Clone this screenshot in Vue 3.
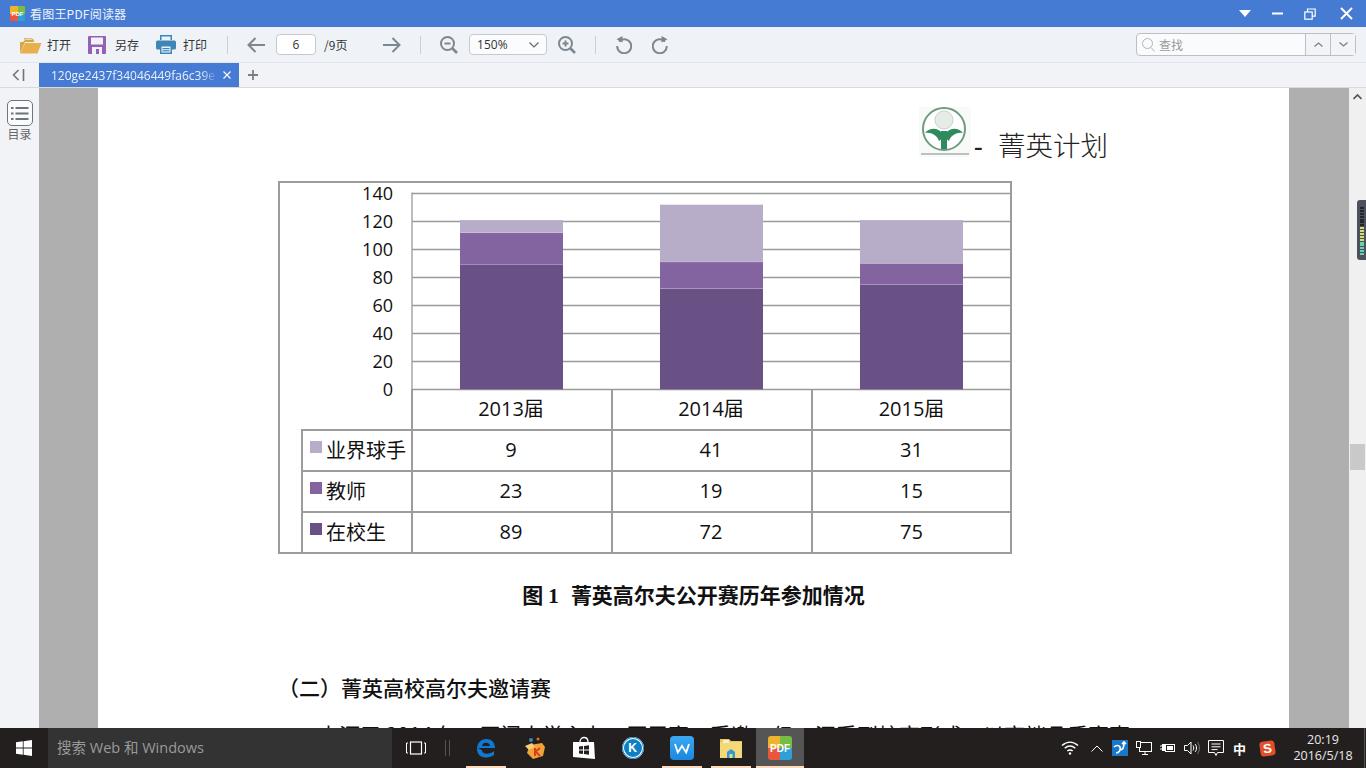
<script setup>
const axis = [140, 120, 100, 80, 60, 40, 20, 0]
const unit = 1.4
const base = 197
const columns = [
  { name: '2013届', x: 48, a: 89, b: 23, c: 9 },
  { name: '2014届', x: 248, a: 72, b: 19, c: 41 },
  { name: '2015届', x: 448, a: 75, b: 15, c: 31 },
]
const rows = [
  { label: '业界球手', color: '#b7adc8', key: 'c' },
  { label: '教师', color: '#8363a0', key: 'b' },
  { label: '在校生', color: '#6a5185', key: 'a' },
]
const segs = (c) => [
  { h: c.a * unit, y: base - c.a * unit, f: '#6a5185' },
  { h: c.b * unit, y: base - (c.a + c.b) * unit, f: '#8363a0' },
  { h: c.c * unit, y: base - (c.a + c.b + c.c) * unit, f: '#b7adc8' },
]
</script>

<template>
  <div class="app">
    <header class="titlebar">
      <span class="pdf-logo small"><i class="q1"></i><i class="q2"></i><i class="q3"></i><i class="q4"></i><b>PDF</b></span>
      <span class="title">看图王PDF阅读器</span>
      <span class="winctl">
        <svg width="12" height="7" viewBox="0 0 12 7"><path d="M0 0h12L6 7z" fill="#fff"/></svg>
        <svg width="11" height="3" viewBox="0 0 11 3"><rect width="11" height="2" y="0.5" fill="#fff"/></svg>
        <svg width="12" height="12" viewBox="0 0 12 12" fill="none" stroke="#fff" stroke-width="1.2"><rect x="0.8" y="4" width="7.4" height="7.2"/><path d="M3.5 4V1h7.7v7.2H8.2"/></svg>
        <svg width="13" height="13" viewBox="0 0 13 13" stroke="#fff" stroke-width="2"><path d="M1 1l11 11M12 1L1 12"/></svg>
      </span>
    </header>

    <div class="toolbar">
      <button class="tool t-open">
        <svg width="23" height="18" viewBox="1 0 23 18"><path d="M1 17V6h3l2-2V3h8l1 2v1H6L1 17z" fill="#d7a648"/><path d="M5 2.5h8l1 1.5H6z" fill="#f5f1e6" stroke="#c99a3f" stroke-width=".6"/><path d="M6 7h16.500l-4 10.500H1z" fill="#e7b04a"/></svg>
        <span>打开</span>
      </button>
      <button class="tool t-save">
        <svg width="18" height="18" viewBox="0 0 18 18"><path d="M0 1a1 1 0 011-1h16a1 1 0 011 1v16a1 1 0 01-1 1H1a1 1 0 01-1-1z" fill="#9462b4"/><rect x="3" y="1.500" width="12" height="7" fill="#f4f0f7"/><rect x="4" y="11" width="10" height="7" fill="#f4f0f7"/><rect x="8" y="13" width="3" height="5" fill="#9462b4"/></svg>
        <span>另存</span>
      </button>
      <button class="tool t-print">
        <svg width="20" height="19" viewBox="0 0 20 19"><rect x="4" y="0" width="12" height="5" fill="#3f86b8"/><rect x="5.500" y="1.500" width="9" height="3.500" fill="#eef2f7"/><rect x="0" y="5.500" width="20" height="9" rx="1.500" fill="#3f86b8"/><rect x="4" y="10" width="12" height="9" fill="#3f86b8"/><rect x="5.500" y="11.500" width="9" height="6" fill="#eef2f7"/><rect x="6.500" y="13" width="7" height="1.200" fill="#3f86b8"/><rect x="6.500" y="15.200" width="7" height="1.200" fill="#3f86b8"/></svg>
        <span>打印</span>
      </button>
      <i class="sep s1"></i>
      <svg class="arrow a-back" width="18" height="16" viewBox="0 0 18 16" fill="none" stroke="#7d8790" stroke-width="2"><path d="M8.500 1L1.500 8l7 7M2 8h16"/></svg>
      <div class="pagebox">6</div>
      <span class="pagecount">/9页</span>
      <svg class="arrow a-next" width="18" height="16" viewBox="0 0 18 16" fill="none" stroke="#7d8790" stroke-width="2"><path d="M9.500 1l7 7-7 7M16 8H0"/></svg>
      <i class="sep s2"></i>
      <svg class="zoom-out" width="18" height="18" viewBox="0 0 18 18" fill="none" stroke="#7d8790" stroke-width="2"><circle cx="7.500" cy="7.500" r="6.500"/><path d="M4.500 7.500h6"/><path d="M12.500 12.500l4.500 4.500" stroke-width="2.600"/></svg>
      <div class="zoombox"><span>150%</span><svg width="10" height="6" viewBox="0 0 10 6" fill="none" stroke="#666" stroke-width="1.200"><path d="M.5.500L5 5 9.500.5"/></svg></div>
      <svg class="zoom-in" width="18" height="18" viewBox="0 0 18 18" fill="none" stroke="#7d8790" stroke-width="2"><circle cx="7.500" cy="7.500" r="6.500"/><path d="M4.500 7.500h6M7.500 4.500v6"/><path d="M12.500 12.500l4.500 4.500" stroke-width="2.600"/></svg>
      <i class="sep s3"></i>
      <svg class="rot-l" width="17" height="19" viewBox="0 0 17 19" fill="none" stroke="#7d8790" stroke-width="2"><path d="M4 6.500a7 7 0 11-1.800 4.500"/><path d="M7.500 1v6.500L1.500 4.200z" fill="#7d8790" stroke="none"/></svg>
      <svg class="rot-r" width="17" height="19" viewBox="0 0 17 19" fill="none" stroke="#7d8790" stroke-width="2"><path d="M13 6.500a7 7 0 101.800 4.500"/><path d="M9.500 1v6.500l6-3.300z" fill="#7d8790" stroke="none"/></svg>
      <div class="search">
        <div class="s-input">
          <svg width="13" height="14" viewBox="0 0 13 14" fill="none" stroke="#b0b4b8" stroke-width="1"><circle cx="5.500" cy="5.500" r="5"/><path d="M9 9.500l3.500 4"/></svg>
          <span>查找</span>
        </div>
        <div class="s-btn"><svg width="9" height="5" viewBox="0 0 9 5" fill="none" stroke="#7b7f84" stroke-width="1.300"><path d="M.5 4.500L4.500 1l4 3.500"/></svg></div>
        <div class="s-btn"><svg width="9" height="5" viewBox="0 0 9 5" fill="none" stroke="#7b7f84" stroke-width="1.300"><path d="M.5.500L4.500 4l4-3.500"/></svg></div>
      </div>
    </div>

    <div class="tabbar">
      <div class="collapse">
        <svg width="13" height="12" viewBox="0 0 13 12" fill="none" stroke="#6d7680" stroke-width="1.600"><path d="M6.500 1L1.500 6l5 5M11.500 0v12"/></svg>
      </div>
      <div class="tab">
        <span class="tabname">120ge2437f34046449fa6c39e</span>
        <svg width="8" height="8" viewBox="0 0 8 8" stroke="#fff" stroke-width="1.100"><path d="M.5.500l7 7M7.500.500l-7 7"/></svg>
      </div>
      <svg class="plus" width="10" height="10" viewBox="0 0 10 10" stroke="#7a8087" stroke-width="1.800"><path d="M5 0v10M0 5h10"/></svg>
    </div>

    <main class="main">
      <aside class="side">
        <div class="toc-icon">
          <svg width="18" height="15" viewBox="0 0 18 15" fill="#6d747b"><rect x="0" y="1" width="2.500" height="2"/><rect x="4.500" y="1" width="13" height="2"/><rect x="0" y="6.500" width="2.500" height="2"/><rect x="4.500" y="6.500" width="13" height="2"/><rect x="0" y="12" width="2.500" height="2"/><rect x="4.500" y="12" width="13" height="2"/></svg>
        </div>
        <span class="toc-label">目录</span>
      </aside>

      <div class="viewer">
        <article class="page">
          <div class="doc-head">
            <svg class="logo" width="52" height="50" viewBox="0 0 52 50">
              <rect width="52" height="50" fill="#f7faf7"/>
              <circle cx="25" cy="22" r="21" fill="#fff" stroke="#6f9b80" stroke-width="2"/>
              <circle cx="25" cy="13" r="9" fill="#e6ebe6" stroke="#c6d2c8"/>
              <path d="M22 24h6v18h-6z" fill="#2f8a5c"/>
              <path d="M25 30c-3-9-13-11-19-4 6-1 12 2 14 8zM25 30c3-9 13-11 19-4-6-1-12 2-14 8z" fill="#2f8a5c"/>
              <rect x="2" y="46" width="48" height="2" fill="#b9c2bc"/>
            </svg>
            <span class="doc-title"><span class="dash">-</span>菁英计划</span>
          </div>

          <section class="chart">
            <svg class="plot" width="733" height="206" viewBox="-134 -9.500 733 206">
              <text v-for="(v, i) in axis" :key="v" class="tick" x="-19" :y="i * 28 + 7" text-anchor="end">{{ v }}</text>
              <line v-for="(v, i) in axis" :key="'g' + v" x1="0" x2="600" :y1="i * 28 + 1" :y2="i * 28 + 1" stroke="#9a9a9a" stroke-width="1.300"/>
              <line x1="0" x2="0" y1="0" y2="197" stroke="#9a9a9a" stroke-width="1.300"/>
              <line x1="599.500" x2="599.500" y1="0" y2="197" stroke="#9a9a9a" stroke-width="1.300"/>
              <g v-for="c in columns" :key="c.name">
                <rect v-for="(s, j) in segs(c)" :key="j" :x="c.x" :y="s.y" width="103" :height="s.h - 0.200" :fill="s.f"/>
              </g>
            </svg>
            <table class="data">
              <tbody>
                <tr>
                  <td class="blank"></td>
                  <td v-for="c in columns" :key="c.name">{{ c.name }}</td>
                </tr>
                <tr v-for="r in rows" :key="r.label">
                  <td class="legend"><i class="swatch" :style="{ background: r.color }"></i>{{ r.label }}</td>
                  <td v-for="c in columns" :key="c.name">{{ c[r.key] }}</td>
                </tr>
              </tbody>
            </table>
          </section>

          <p class="caption"><span class="latin">图 1</span>菁英高尔夫公开赛历年参加情况</p>
          <h3 class="section-title">（二）菁英高校高尔夫邀请赛</h3>
          <p class="body-line">本源于 2014 年，厦门大学主办，历届赛，受邀一级，深受到校高形成，以高端品质赛事</p>
        </article>
      </div>

      <div class="scroll">
        <svg width="9" height="6" viewBox="0 0 9 6" fill="none" stroke="#555" stroke-width="1.700"><path d="M.5 5L4.500 1l4 4"/></svg>
        <div class="thumb"></div>
      </div>
      <div class="meter">
        <i v-for="n in 17" :key="n" :class="n > 12 ? 'm-teal' : n > 7 ? 'm-yellow' : 'm-dark'"></i>
      </div>
    </main>

    <footer class="taskbar">
      <div class="start">
        <svg width="16" height="16" viewBox="0 0 16 16" fill="#fff"><path d="M0 2.300l6.800-1v6.300H0zM7.600 1.200L16 0v7.600H7.600zM0 8.400h6.800v6.300L0 13.700zM7.600 8.400H16V16l-8.400-1.200z"/></svg>
      </div>
      <div class="tsearch">搜索 Web 和 Windows</div>
      <svg class="taskview" width="20" height="14" viewBox="0 0 20 14" fill="none" stroke="#fff"><rect x="4.500" y="1" width="11" height="12" stroke-width="1.200"/><path d="M2 2H.5v10H2M18 2h1.500v10H18"/></svg>
      <i class="grip"></i>
      <div class="apps">
        <div class="app-slot u">
          <svg width="22" height="22" viewBox="0 0 22 22" fill="none"><path d="M3 11h17c0-6-4-9-8.500-9C6 2 2 6 2 12c0 6 4.500 8.500 9 8.500 3 0 6-1 8-2.500v-4c-2 1.700-4.500 2.700-7 2.700-3 0-5-1.500-5.300-3.700z" fill="#0f78d4"/><path d="M7 9h8c-.2-2-2-3.200-4-3.200S7.300 7 7 9z" fill="#231f1f"/></svg>
        </div>
        <div class="app-slot">
          <svg width="24" height="24" viewBox="0 0 24 24"><path d="M7 9l12-2 3 4-2 9-10 3-6-6z" fill="#f1a33a"/><path d="M2 10l7-3 3 4-6 3z" fill="#f8cd74"/><circle cx="8" cy="4" r="2" fill="#3f83c4"/><circle cx="15" cy="3" r="1.500" fill="#e66a2b"/><path d="M12 12v8M12 16l5-4M13 16l4 4" stroke="#d6401f" stroke-width="2" fill="none"/></svg>
        </div>
        <div class="app-slot">
          <svg width="22" height="24" viewBox="0 0 22 24"><path d="M7 6c0-6 8-6 8 0" fill="none" stroke="#fff" stroke-width="1.300"/><path d="M0 6h21l1 17-22-2z" fill="#fff"/><path d="M6 10.500l4-.5v3.500H6zM11 9.900l5-.6v4.200h-5zM6 14.500h4V18l-4-.5zM11 14.500h5v4.200l-5-.6z" fill="#231f1f"/></svg>
        </div>
        <div class="app-slot">
          <span class="k-icon">K</span>
        </div>
        <div class="app-slot u">
          <span class="w-icon"><svg width="16" height="11" viewBox="0 0 16 11" fill="none" stroke="#fff" stroke-width="1.800"><path d="M1 1l2.800 8.500L8 3l4.200 6.500L15 1"/></svg></span>
        </div>
        <div class="app-slot u">
          <svg width="22" height="20" viewBox="0 0 22 20"><path d="M0 1h9l2 2h11v17H0z" fill="#e9c65c"/><rect x="0" y="4" width="22" height="16" fill="#f5d979"/><path d="M3 2h6v3H3z" fill="#f7efd0"/><path d="M7 14l4-3 4 3v6H7z" fill="#2a9bd8"/><rect x="9.500" y="16" width="3" height="4" fill="#f5d979"/></svg>
        </div>
        <div class="app-slot active">
          <span class="pdf-logo"><i class="q1"></i><i class="q2"></i><i class="q3"></i><i class="q4"></i><b>PDF</b></span>
        </div>
      </div>
      <div class="tray">
        <svg class="wifi" width="18" height="14" viewBox="0 0 18 14" fill="none" stroke="#fff" stroke-width="1.500"><path d="M1 4.500c5-4.500 11-4.500 16 0M3.700 7.300c3.500-3 7.100-3 10.600 0M6.300 10c1.900-1.500 3.500-1.500 5.400 0"/><circle cx="9" cy="12.500" r="1.200" fill="#fff" stroke="none"/></svg>
        <svg class="caret" width="12" height="7" viewBox="0 0 12 7" fill="none" stroke="#fff"><path d="M.5 6.500L6 1l5.500 5.500"/></svg>
        <span class="blue-t"><svg width="16" height="16" viewBox="0 0 16 16" fill="none" stroke="#fff" stroke-width="1.700"><path d="M2 7c2-2 5-2 6 0 1 3-1 6-4 6M8 10c2 0 4-2 4-7M10 4l2-2 2 2"/></svg></span>
        <svg class="net" width="16" height="16" viewBox="0 0 16 16" fill="none" stroke="#fff"><rect x="3.500" y="2.500" width="12" height="9"/><path d="M9 11.500v3M6 14.500h6"/><rect x=".5" y="1.500" width="4" height="6" fill="#231f1f"/></svg>
        <svg class="batt" width="16" height="10" viewBox="0 0 16 10" fill="none" stroke="#fff"><path d="M0 3h2M0 6h2"/><rect x="2" y="1" width="3" height="7" fill="#fff" stroke="none"/><rect x="5.500" y="1.500" width="9" height="7"/><rect x="7" y="3" width="6" height="4" fill="#fff" stroke="none"/></svg>
        <svg class="vol" width="16" height="14" viewBox="0 0 16 14" fill="none" stroke="#fff"><path d="M.5 4.500h3L7 1v12L3.500 9.500h-3z"/><path d="M9 4.500c1 1.500 1 3.500 0 5M11 3c2 2 2 6 0 8"/><path d="M13.500 1c2.500 3.500 2.500 8.500 0 12" stroke="#777"/></svg>
        <svg class="note" width="16" height="17" viewBox="0 0 16 17" fill="none" stroke="#fff"><path d="M.5.500h15v12H9.500l-1.500 3-1.500-3h-6z"/><path d="M3.500 4h9M3.500 6.800h9M3.500 9.600h6"/></svg>
        <span class="ime">中</span>
        <span class="sogou"><b>S</b></span>
        <div class="clock"><span>20:19</span><span>2016/5/18</span></div>
        <i class="show-desk"></i>
      </div>
    </footer>
  </div>
</template>

<style scoped>
.app {
  width: 1366px;
  height: 768px;
  display: flex;
  flex-direction: column;
  overflow: hidden;
  font-family: "Noto Sans CJK SC", "Noto Sans", sans-serif;
  color: #333;
}
.titlebar {
  height: 27px;
  flex: none;
  background: #467bd3;
  display: flex;
  align-items: center;
  padding-left: 10px;
}
.title { margin-left: 5px; font-size: 12px; letter-spacing: .2px; color: #eef3fb; }
.winctl { margin-left: auto; padding-right: 13px; display: flex; align-items: center; gap: 21px; }
.winctl svg:last-child { margin-left: 3px; }

.pdf-logo {
  position: relative;
  width: 24px;
  height: 24px;
  border-radius: 3px;
  overflow: hidden;
  display: grid;
  grid-template-columns: 1fr 1fr;
  grid-template-rows: 1fr 1fr;
  flex: none;
}
.pdf-logo.small { width: 15px; height: 15px; border-radius: 1px; }
.pdf-logo i { display: block; }
.q1 { background: #f0b32c; }
.q2 { background: #76bd45; }
.q3 { background: #e8573d; }
.q4 { background: #2f9fd8; }
.pdf-logo b {
  position: absolute;
  inset: 0;
  display: flex;
  align-items: center;
  justify-content: center;
  color: #fff;
  font: 700 10px "Liberation Sans", sans-serif;
}
.pdf-logo.small b { font-size: 6px; }

.toolbar {
  height: 36px;
  flex: none;
  box-sizing: border-box;
  background: #eff3f8;
  border-bottom: 1px solid #e2e5ea;
  display: flex;
  align-items: center;
  padding-left: 20px;
  font-size: 12px;
}
.tool {
  border: 0;
  background: none;
  padding: 0;
  display: flex;
  align-items: center;
  font: inherit;
  color: #333;
}
.t-open span { margin-left: 4px; }
.t-save { margin-left: 17px; }
.t-save span { margin-left: 9px; }
.t-print { margin-left: 17px; }
.t-print span { margin-left: 7px; }
.sep { width: 1px; height: 18px; background: #ccd0d5; flex: none; }
.s1 { margin-left: 20px; }
.a-back { margin-left: 19px; }
.pagebox {
  margin-left: 11px;
  width: 40px;
  height: 21px;
  box-sizing: border-box;
  border: 1px solid #c6cacf;
  border-radius: 4px;
  background: #fff;
  text-align: center;
  line-height: 19px;
  font-family: "Open Sans", sans-serif;
}
.pagecount { margin-left: 8px; width: 25px; white-space: nowrap; }
.a-next { margin-left: 34px; }
.s2 { margin-left: 19px; }
.zoom-out { margin-left: 19px; }
.zoombox {
  margin-left: 11px;
  width: 78px;
  height: 21px;
  box-sizing: border-box;
  border: 1px solid #c6cacf;
  border-radius: 4px;
  background: #fbfcfe;
  display: flex;
  align-items: center;
  justify-content: space-between;
  padding: 0 7px;
  font-family: "Open Sans", sans-serif;
}
.zoom-in { margin-left: 11px; }
.s3 { margin-left: 19px; }
.rot-l { margin-left: 19px; }
.rot-r { margin-left: 20px; }
.search {
  margin-left: auto;
  margin-right: 10px;
  width: 220px;
  height: 23px;
  box-sizing: border-box;
  border: 1px solid #bcc0c5;
  border-radius: 4px;
  background: #f9fbfd;
  display: flex;
}
.s-input { flex: 1; display: flex; align-items: center; gap: 4px; padding-left: 5px; color: #9a9a9a; }
.s-btn { width: 25px; box-sizing: border-box; border-left: 1px solid #bcc0c5; background: #f2f4f7; display: flex; align-items: center; justify-content: center; }

.tabbar {
  height: 25px;
  flex: none;
  box-sizing: border-box;
  background: #f1f3f6;
  border-bottom: 1px solid #d9d9d9;
  display: flex;
  align-items: stretch;
}
.collapse { width: 39px; display: flex; align-items: center; padding-left: 12px; box-sizing: border-box; }
.tab {
  width: 200px;
  background: #467bd3;
  color: #e9f0fb;
  display: flex;
  align-items: center;
  padding-left: 12px;
  box-sizing: border-box;
  gap: 5px;
}
.tabname {
  width: 167px;
  overflow: hidden;
  white-space: nowrap;
  font: 12px "Open Sans", sans-serif;
  -webkit-mask-image: linear-gradient(90deg, #000 150px, transparent 167px);
  mask-image: linear-gradient(90deg, #000 150px, transparent 167px);
}
.plus { align-self: center; margin-left: 9px; }

.main { flex: 1; min-height: 0; display: flex; position: relative; overflow: hidden; }
.side {
  width: 39px;
  flex: none;
  background: #f1f3f6;
  display: flex;
  flex-direction: column;
  align-items: center;
  padding-top: 12px;
  box-sizing: border-box;
}
.toc-icon {
  width: 26px;
  height: 26px;
  box-sizing: border-box;
  border: 1px solid #70767d;
  border-radius: 5px;
  background: #fafbfc;
  display: flex;
  align-items: center;
  justify-content: center;
}
.toc-label { font-size: 12px; line-height: 16px; color: #666; }
.viewer { flex: 1; background: #b0afb0; padding: 0 60px 0 59px; overflow: hidden; }
.page { background: #fff; height: 100%; overflow: hidden; color: #111; }
.doc-head { display: flex; justify-content: flex-end; padding: 19px 181px 0 0; height: 74px; box-sizing: border-box; }
.logo { flex: none; }
.doc-title { font-size: 27.5px; font-weight: 300; line-height: 38px; margin-top: 18px; margin-left: 3px; color: #222; white-space: nowrap; }
.dash { margin-right: 15px; font-family: "Liberation Sans", sans-serif; }
.chart {
  margin: 19px 0 0 180px;
  width: 734px;
  box-sizing: border-box;
  border: 2px solid #9c9c9c;
  height: 373px;
  overflow: hidden;
}
.plot { display: block; margin-left: -2px; overflow: visible; }
.tick { font: 18px "Open Sans", sans-serif; fill: #111; }
.data {
  border-collapse: collapse;
  table-layout: fixed;
  margin-left: 21px;
  width: 711px;
  font: 20px "Open Sans", "Noto Sans CJK SC", sans-serif;
  color: #111;
}
.data td { box-sizing: border-box; height: 41px; border: 2px solid #9c9c9c; text-align: center; padding: 0 2px 3px 0; width: 200px; }
.data tr:last-child td { border-bottom: 0; }
.data td:last-child { border-right: 0; }
.data tr:first-child td { border-top: 0; }
.data td.blank { border-left: 0; border-bottom: 2px solid #9c9c9c; width: 110px; }
.data td.legend { width: 110px; text-align: left; white-space: nowrap; padding-left: 7px; }
.swatch { display: inline-block; width: 12px; height: 12px; margin-right: 4px; vertical-align: 5px; }
.caption { margin: 25px 0 0; text-align: center; font-size: 21px; line-height: 30px; font-weight: 700; }
.latin { font-family: "Liberation Serif", "Noto Sans CJK SC", serif; margin-right: 12px; }
.section-title { margin: 61px 0 0 180px; font-size: 21px; line-height: 30px; font-weight: 500; }
.body-line { margin: 17px 0 0 220px; font-size: 21px; line-height: 30px; white-space: nowrap; }

.scroll { width: 17px; flex: none; background: #f0f0f0; display: flex; flex-direction: column; align-items: center; padding-top: 6px; box-sizing: border-box; }
.thumb { width: 15px; height: 26px; margin-top: 344px; background: #c9c9c9; }
.meter {
  position: absolute;
  right: 0;
  top: 112px;
  width: 9px;
  height: 60px;
  box-sizing: border-box;
  background: #4d515e;
  border-radius: 3px 0 0 3px;
  padding: 7px 2px 5px 3px;
  display: flex;
  flex-direction: column;
  justify-content: space-between;
}
.meter i { display: block; height: 2px; }
.m-dark { background: #23262c; }
.m-yellow { background: #d6dc6e; }
.m-teal { background: #66d0b4; }

.taskbar {
  height: 40px;
  flex: none;
  background: #231f1f;
  display: flex;
  align-items: center;
  color: #fff;
}
.start { width: 48px; display: flex; justify-content: center; }
.tsearch {
  width: 344px;
  height: 40px;
  background: #333;
  box-sizing: border-box;
  padding-left: 9px;
  font: 14.5px/40px "Open Sans", "Noto Sans CJK SC", sans-serif;
  color: #9a9a9a;
  white-space: nowrap;
}
.taskview { margin-left: 14px; }
.grip { margin-left: 19px; width: 3px; height: 16px; border-left: 1px solid #555; border-right: 1px solid #555; }
.apps { margin-left: 11px; display: flex; height: 40px; }
.app-slot { width: 49px; height: 40px; display: flex; align-items: center; justify-content: center; box-sizing: border-box; position: relative; }
.app-slot.u::after { content: ""; position: absolute; left: 5px; right: 4px; bottom: 0; height: 2px; background: #fcdcbd; }
.app-slot.active { background: #555; width: 48px; margin-left: 1px; }
.app-slot.active::after { content: ""; position: absolute; left: 0; right: 0; bottom: 0; height: 2px; background: #fcdcbd; }
.k-icon {
  width: 22px;
  height: 22px;
  box-sizing: border-box;
  border-radius: 50%;
  background: #0d7fc4;
  border: 2px solid #fff;
  outline: 1px solid #0d7fc4;
  outline-offset: -1px;
  color: #fff;
  font: 700 12px/18px "Liberation Sans", sans-serif;
  text-align: center;
}
.w-icon { width: 24px; height: 24px; border-radius: 4px; background: linear-gradient(#3aa9f2, #1c86e0); display: flex; align-items: center; justify-content: center; }
.tray { margin-left: auto; display: flex; align-items: center; height: 40px; }
.wifi { margin-right: 12px; }
.caret { margin-right: 9px; }
.blue-t { width: 16px; height: 16px; background: #1b78c8; margin-right: 8px; display: block; }
.blue-t svg { display: block; }
.net { margin-right: 8px; }
.batt { margin-right: 8px; }
.vol { margin-right: 8px; }
.note { margin-right: 9px; }
.ime { font-size: 13px; font-weight: 700; width: 13px; margin-right: 14px; }
.sogou { width: 15px; height: 15px; border-radius: 3px; background: #e2502a; transform: rotate(-8deg); display: flex; align-items: center; justify-content: center; margin-right: 18px; }
.sogou b { font: 700 13px "Liberation Sans", sans-serif; color: #fff; }
.clock { display: flex; flex-direction: column; align-items: center; width: 60px; font: 12.5px/16px "Open Sans", sans-serif; color: #e8e8e8; }
.show-desk { width: 1px; height: 40px; background: #555; margin-left: 11px; margin-right: 1px; }
</style>
<style>
html, body { margin: 0; background: #fff; overflow: hidden; }
</style>
